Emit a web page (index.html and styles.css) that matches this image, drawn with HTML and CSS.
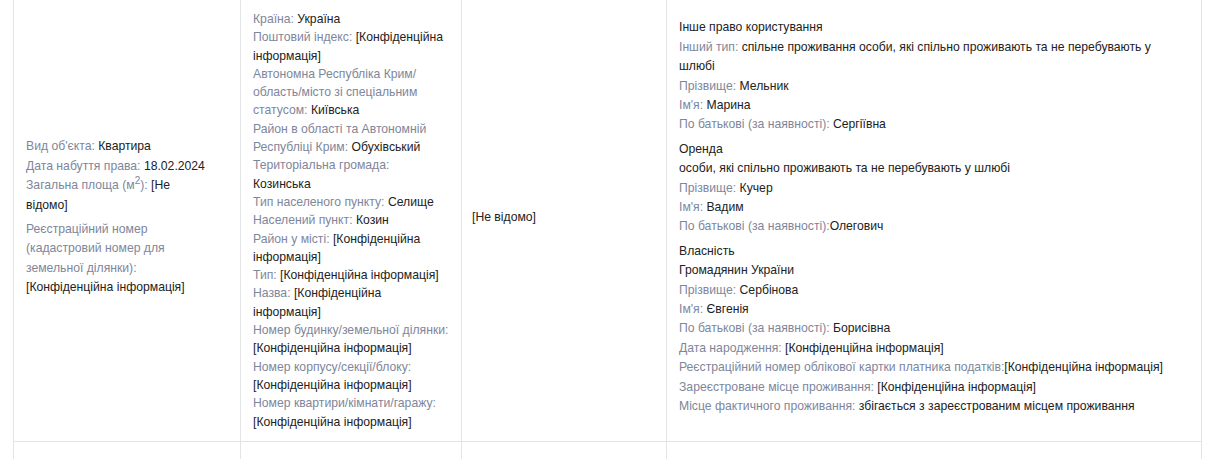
FILE: index.html
```html
<!DOCTYPE html>
<html lang="uk">
<head>
<meta charset="utf-8">
<title>Реєстр</title>
<link rel="stylesheet" href="styles.css">
</head>
<body>
<div class="wrap">
<table class="reg">
  <colgroup>
    <col class="c1"><col class="c2"><col class="c3"><col class="c4">
  </colgroup>
  <tbody>
    <tr>
      <td class="obj">
        <div class="block">
          <div><span class="lbl">Вид об'єкта:</span> Квартира</div>
          <div><span class="lbl">Дата набуття права:</span> 18.02.2024</div>
          <div><span class="lbl">Загальна площа (м<sup>2</sup>):</span> [Не відомо]</div>
        </div>
        <div class="block">
          <div><span class="lbl">Реєстраційний номер (кадастровий номер для земельної ділянки):</span> [Конфіденційна інформація]</div>
        </div>
      </td>
      <td class="addr">
        <div><span class="lbl">Країна:</span> Україна</div>
        <div><span class="lbl">Поштовий індекс:</span> [Конфіденційна інформація]</div>
        <div><span class="lbl">Автономна Республіка Крим/ область/місто зі спеціальним статусом:</span> Київська</div>
        <div><span class="lbl">Район в області та Автономній Республіці Крим:</span> Обухівський</div>
        <div><span class="lbl">Територіальна громада:</span> Козинська</div>
        <div><span class="lbl">Тип населеного пункту:</span> Селище</div>
        <div><span class="lbl">Населений пункт:</span> Козин</div>
        <div><span class="lbl">Район у місті:</span> [Конфіденційна інформація]</div>
        <div><span class="lbl">Тип:</span> [Конфіденційна інформація]</div>
        <div><span class="lbl">Назва:</span> [Конфіденційна інформація]</div>
        <div><span class="lbl">Номер будинку/земельної ділянки:</span> [Конфіденційна інформація]</div>
        <div><span class="lbl">Номер корпусу/секції/блоку:</span> [Конфіденційна інформація]</div>
        <div><span class="lbl">Номер квартири/кімнати/гаражу:</span> [Конфіденційна інформація]</div>
      </td>
      <td class="misc">[Не відомо]</td>
      <td class="rights">
        <div class="block">
          <div>Інше право користування</div>
          <div><span class="lbl">Інший тип:</span> спільне проживання особи, які спільно проживають та не перебувають у шлюбі</div>
          <div><span class="lbl">Прізвище:</span> Мельник</div>
          <div><span class="lbl">Ім'я:</span> Марина</div>
          <div><span class="lbl">По батькові (за наявності):</span> Сергіївна</div>
        </div>
        <div class="block">
          <div>Оренда</div>
          <div>особи, які спільно проживають та не перебувають у шлюбі</div>
          <div><span class="lbl">Прізвище:</span> Кучер</div>
          <div><span class="lbl">Ім'я:</span> Вадим</div>
          <div><span class="lbl">По батькові (за наявності):</span>Олегович</div>
        </div>
        <div class="block">
          <div>Власність</div>
          <div>Громадянин України</div>
          <div><span class="lbl">Прізвище:</span> Сербінова</div>
          <div><span class="lbl">Ім'я:</span> Євгенія</div>
          <div><span class="lbl">По батькові (за наявності):</span> Борисівна</div>
          <div><span class="lbl">Дата народження:</span> [Конфіденційна інформація]</div>
          <div><span class="lbl">Реєстраційний номер облікової картки платника податків:</span>[Конфіденційна інформація]</div>
          <div><span class="lbl">Зареєстроване місце проживання:</span> [Конфіденційна інформація]</div>
          <div><span class="lbl">Місце фактичного проживання:</span> збігається з зареєстрованим місцем проживання</div>
        </div>
      </td>
    </tr>
    <tr>
      <td class="obj"></td>
      <td class="addr"></td>
      <td class="misc"></td>
      <td class="rights next">
        <div class="block">
          <div>Інше право користування</div>
        </div>
      </td>
    </tr>
  </tbody>
</table>
</div>
</body>
</html>
```

FILE: styles.css
```css
html, body {
  margin: 0;
  padding: 0;
  background: #fff;
}

body {
  font-family: "Liberation Sans", Arial, sans-serif;
  font-size: 12.2px;
  color: #222;
}

.wrap {
  padding-left: 13px;
  margin-top: -1px;
}

.reg {
  border-collapse: collapse;
  table-layout: fixed;
  width: 1188px;
}

.c1 { width: 227px; }
.c2 { width: 221px; }
.c3 { width: 205px; }
.c4 { width: 535px; }

.reg td {
  border: 1px solid #e3e4e6;
  vertical-align: middle;
  padding: 10px 12px;
  line-height: 19.4px;
}

.lbl {
  color: #7e869b;
}

sup {
  font-size: 10px;
  line-height: 0;
  vertical-align: 5px;
}

.block + .block {
  margin-top: 5px;
}

.reg td.obj {
  padding-right: 30px;
  padding-bottom: 16px;
}

.reg td.addr {
  line-height: 18.3px;
  padding-right: 12px;
}

.reg td.misc {
  padding-left: 10px;
  padding-bottom: 16px;
}

.reg td.rights {
  padding-right: 20px;
  padding-bottom: 16px;
}

.reg td.next {
  vertical-align: top;
  padding-top: 13px;
}
```
